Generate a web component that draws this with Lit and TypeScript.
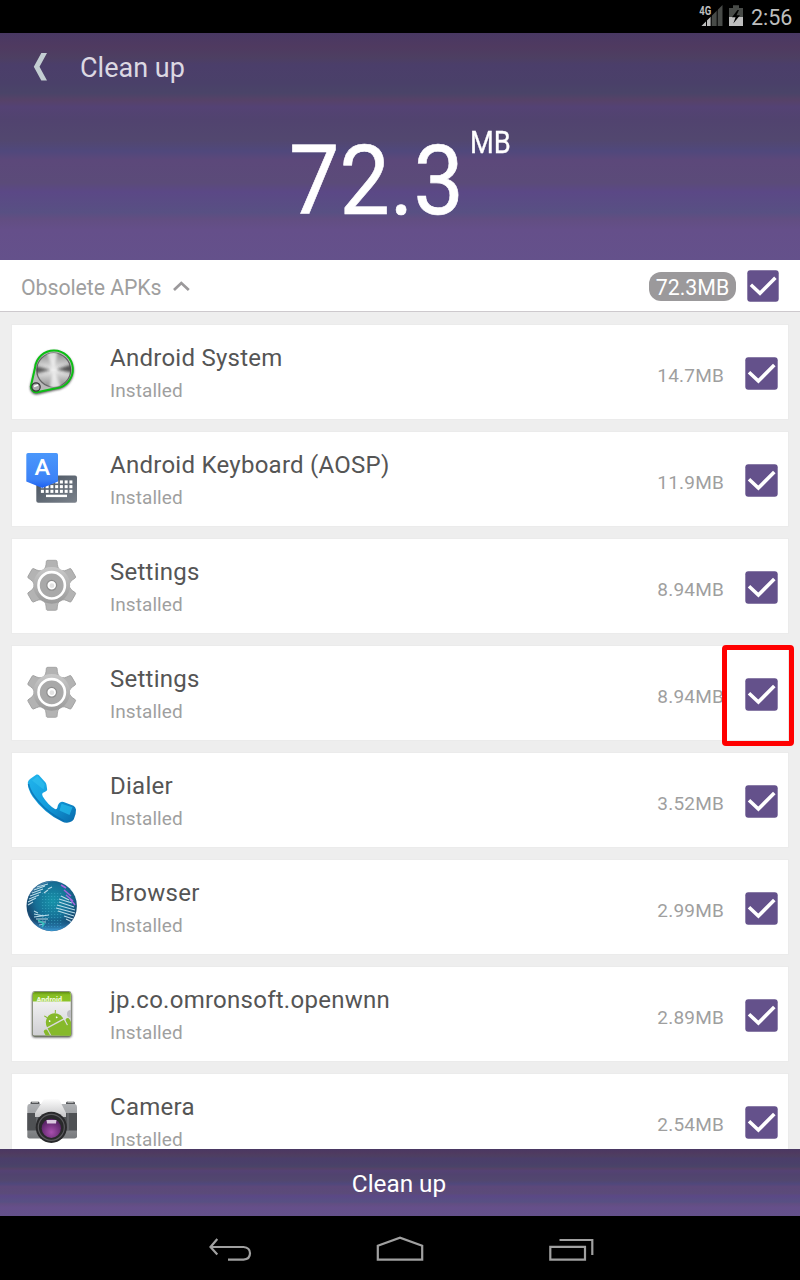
import { LitElement, html, svg, css } from "lit";
import { customElement, property } from "lit/decorators.js";

const androidSystem = svg`
  <defs>
    <linearGradient id="g1" x1="0" y1="0" x2="0" y2="1"><stop offset="0" stop-color="#8a8a8a"/><stop offset=".5" stop-color="#eee"/><stop offset="1" stop-color="#8b8b8b"/></linearGradient>
    <filter id="s1" x="-20%" y="-20%" width="140%" height="140%"><feGaussianBlur stdDeviation="1.3"/></filter>
    <filter id="s2" x="-20%" y="-20%" width="140%" height="140%"><feGaussianBlur stdDeviation="1.4"/></filter>
    <clipPath id="s3"><circle cx="29.7" cy="27" r="17"/></clipPath>
  </defs>
  <path d="M11.1 25 A18.7 18.7 0 1 1 33 45 L13 49.6 A5.8 5.8 0 0 1 6.6 43.5 Z" transform="translate(.3 .9)" fill="#555" stroke="#555" stroke-width="2" filter="url(#s1)"/>
  <path d="M11.1 24.5 A18.9 18.9 0 1 1 33 45 L13 49.3 A5.8 5.8 0 0 1 6.8 43.5 Z" fill="#b9b9b9" stroke="#0bbf13" stroke-width="2"/>
  <circle cx="29.7" cy="27" r="17" fill="url(#g1)" stroke="#666" stroke-width="1.2"/>
  <g clip-path="url(#s3)"><g filter="url(#s2)">
    <path d="M27 27 L10 22.5 V31 Z" fill="#333" opacity=".8"/>
    <path d="M32 26.5 L49 21 V30 Z" fill="#2a2a2a" opacity=".8"/>
    <path d="M29.7 27 L22 8 H34 Z M29.7 27 L25 46 H38 Z" fill="#fff" opacity=".7"/>
  </g></g>
  <circle cx="12" cy="44" r="4.2" fill="#aaa" stroke="#333" stroke-width="1.2"/>
  <path d="M10 43.5 L14 42" stroke="#fff" stroke-width="1.4"/>`;

const keyboard = svg`
  <defs>
    <linearGradient id="k1" x1="0" y1="0" x2="0" y2="1"><stop offset="0" stop-color="#4a97fb"/><stop offset=".75" stop-color="#3d83f7"/><stop offset="1" stop-color="#1d5ff0"/></linearGradient>
    <linearGradient id="k2" x1="0" y1="0" x2="1" y2="1"><stop offset="0" stop-color="#46515e"/><stop offset="1" stop-color="#7b828b"/></linearGradient>
  </defs>
  <rect x="12.3" y="25.6" width="40.7" height="27.2" rx="2" fill="url(#k2)"/>
  ${[0, 1, 2].map((r) => [0, 1, 2, 3, 4, 5, 6].map((c) => svg`<rect x=${16.9 + c * 4.75} y=${30.4 + r * 4.7} width="3" height="3.1" fill="#fff"/>`))}
  <rect x="22" y="44.7" width="21" height="2.4" fill="#fff"/>
  <path d="M4 3 H32.3 Q34 3 34 4.7 V31.5 L18.3 38 L2.3 31.5 V4.7 Q2.3 3 4 3 Z" fill="url(#k1)"/>
  <text x="18.2" y="25" text-anchor="middle" textLength="15.6" lengthAdjust="spacingAndGlyphs" font-family="Roboto, sans-serif" font-size="22.5" font-weight="500" fill="#fff">A</text>`;

const gear = svg`
  <defs><linearGradient id="e1" x1="0" y1="0" x2="0" y2="1"><stop offset="0" stop-color="#c9c9c9"/><stop offset="1" stop-color="#9a9a9a"/></linearGradient></defs>
  <g fill="#b3b3b3" stroke="#9c9c9c" stroke-width=".8">
    ${[0, 60, 120, 180, 240, 300].map((a) => svg`<path transform="rotate(${a} 27.7 28.3)" d="M20 12.5 Q22 10 22 7.5 L22.4 4 Q22.6 3.3 24 3.3 H31.4 Q32.8 3.3 33 4 L33.4 7.5 Q33.4 10 35.4 12.5 Z"/>`)}
  </g>
  <circle cx="27.7" cy="28.3" r="18.4" fill="url(#e1)"/>
  <circle cx="27.7" cy="28.3" r="13.2" fill="#a9a9a9" stroke="#fff" stroke-width="2.6"/>
  <circle cx="27.7" cy="28.3" r="4.9" fill="#fff" stroke="#8d8d8d" stroke-width="1.3"/>
  <circle cx="27.9" cy="28.7" r="2.4" fill="#e3e3e3"/>`;

const dialer = svg`
  <defs><linearGradient id="d1" x1="0" y1="0" x2=".9" y2="1"><stop offset="0" stop-color="#22b4ec"/><stop offset=".55" stop-color="#129ddd"/><stop offset="1" stop-color="#0a6fb0"/></linearGradient></defs>
  <path d="M12.5 3.6 Q13.8 3 14.8 4 L21.5 11.5 Q22.3 12.5 22.5 14 L23.2 18.4 Q23 20 21.5 20.6 L18.6 22 Q17.6 23 18.8 25.5 Q24 34 31 38 Q33 38.6 33.4 36.5 Q34 32 37 30.9 Q38.3 30.6 39.6 31 L49.5 34.8 Q51.4 35.8 52 38.5 Q52.3 42.5 49.8 48.2 Q48.3 51 43 51.8 Q40.5 52 38 50.6 Q20 42 8.5 25.5 Q3.6 18 3.8 11.5 Q4 9.6 6 8 Z" fill="url(#d1)"/>
  <path d="M37.5 32.8 L48.5 36.2 L45.5 44 L35.5 39.5 Z" fill="#27bdee" opacity=".7"/>
  <path d="M13.5 5 L20.8 13.3 L19.5 18.5 L8 9.5 Z" fill="#35c6f2" opacity=".5"/>
  <path d="M4.5 13 Q6 21 14 30 Q25 43 40 50" fill="none" stroke="#0a69ab" stroke-width="1.5" opacity=".7"/>`;

const browser = svg`
  <defs>
    <radialGradient id="b1" cx=".52" cy=".4" r=".62"><stop offset="0" stop-color="#1793a9"/><stop offset=".55" stop-color="#166f96"/><stop offset=".85" stop-color="#17486f"/><stop offset="1" stop-color="#3a6493"/></radialGradient>
    <linearGradient id="b2" x1="0" y1="0" x2="0" y2="1"><stop offset=".75" stop-color="#2a8fcb" stop-opacity="0"/><stop offset="1" stop-color="#42b4ef"/></linearGradient>
    <pattern id="b3" width="3" height="3" patternUnits="userSpaceOnUse"><rect width="1.2" height="1" fill="#48b4cf"/></pattern>
    <clipPath id="b4"><circle cx="27.7" cy="28" r="25"/></clipPath>
  </defs>
  <circle cx="27.7" cy="28" r="25.2" fill="url(#b1)"/>
  <g clip-path="url(#b4)">
    <rect x="17" y="14" width="22" height="36" fill="url(#b3)" opacity=".5"/>
    <path d="M0 0 H56 V15 Q38 -3 17 7 Q8 12 0 26 Z" fill="#8ba9d4" opacity=".4"/>
    <g stroke="#b9dbe8" stroke-width="1.1" fill="none">
      <path d="M13 9 L24 6 M10 12 L21 8 M8 15 L19 11 M6 18 L17 14 M5 21 L15 17 M4 24 L12 20 M4 27 L9 24 M24 11 L28 9 M20 15 L24 12"/>
      <path d="M10 33 L14 35 M10 36 L20 38 M10 39 L25 37 M12 41 L24 41 M14 44 L22 44 M15 47 L20 46"/>
      <path d="M35 24 L50 29 M33 27 L51 32 M32 30 L51 35 M34 33 L50 38 M40 38 L49 41 M42 41 L48 44 M37 18 L45 22 M35 21 L48 25"/>
    </g>
    <path d="M37 7 L42 10 M40 12 L47 18 M42 17 L49 23 M46 21 L51 27" stroke="#a565dc" stroke-width="1.5"/>
    <path d="M14 42 L20 46 L18 49" stroke="#31d2b4" stroke-width="1.5" fill="none"/>
    <rect width="56" height="56" fill="url(#b2)"/>
  </g>`;

const openwnn = svg`
  <defs>
    <linearGradient id="o1" x1="0" y1="0" x2="0" y2="1"><stop offset="0" stop-color="#fafafa"/><stop offset="1" stop-color="#cfcfd3"/></linearGradient>
    <linearGradient id="o2" x1="0" y1="0" x2="0" y2="1"><stop offset="0" stop-color="#5f8f12"/><stop offset=".3" stop-color="#86bd21"/><stop offset="1" stop-color="#8bc32a"/></linearGradient>
    <clipPath id="o3"><rect x="8.8" y="16" width="38.2" height="34.4" rx="1"/></clipPath>
    <clipPath id="o4"><rect x="8" y="6" width="40" height="10.4"/></clipPath>
    <filter id="o5"><feGaussianBlur stdDeviation="1"/></filter>
  </defs>
  <rect x="8" y="8" width="39.8" height="44.6" rx="3" fill="#555" filter="url(#o5)"/>
  <rect x="8.3" y="6.3" width="39" height="45.2" rx="2.4" fill="#6b7558"/>
  <rect x="8.8" y="7" width="38" height="43.4" rx="1.5" fill="url(#o1)"/>
  <path d="M8.8 16.4 V9 Q8.8 7 10.8 7 H45 Q46.8 7 46.8 9 V16.4 Z" fill="url(#o2)"/>
  <g clip-path="url(#o4)"><text x="12.6" y="17" textLength="25.4" lengthAdjust="spacingAndGlyphs" font-family="Roboto, sans-serif" font-weight="900" font-size="7.2" fill="#f0fadb">Android</text></g>
  <g clip-path="url(#o3)">
    <circle cx="47" cy="29" r="4" fill="#bdbdc2"/>
    <g transform="translate(32 39.5) rotate(-28)" fill="#86b92b" stroke="#86b92b">
      <path d="M-9.2 -1.8 A9.2 9.7 0 0 1 9.2 -1.8 Z" stroke="none"/>
      <path d="M-4.5 -10 L-6.3 -13.2 M4.5 -10 L6.3 -13.2" stroke-width="1"/>
      <path d="M-9.2 -.5 H9.2 V17 H-9.2 Z" stroke="none"/>
      <path d="M9 6 H20 V20 H-6 V14 Z" stroke="none"/>
      <rect x="-14.3" y="-.5" width="4" height="12" rx="2" stroke="none"/>
      <rect x="10.4" y="-.5" width="4" height="12" rx="2" stroke="none"/>
      <circle cx="-4" cy="-6" r=".9" fill="#fff" stroke="none"/><circle cx="4" cy="-6" r=".9" fill="#fff" stroke="none"/>
    </g>
  </g>`;

const camera = svg`
  <defs>
    <linearGradient id="c1" x1="0" y1="0" x2="0" y2="1"><stop offset="0" stop-color="#b0b2b5"/><stop offset="1" stop-color="#77797c"/></linearGradient>
    <linearGradient id="c2" x1="0" y1="0" x2="0" y2="1"><stop offset="0" stop-color="#fcfcfc"/><stop offset="1" stop-color="#c6c6c8"/></linearGradient>
    <radialGradient id="c3" cx=".5" cy=".7" r=".6"><stop offset="0" stop-color="#a84fae"/><stop offset="1" stop-color="#5b2468"/></radialGradient>
  </defs>
  <rect x="6.5" y="9.5" width="9" height="4" rx="1.5" fill="#55575a"/><rect x="42" y="9.5" width="9" height="4" rx="1.5" fill="#55575a"/>
  <rect x="8" y="9.3" width="6" height="1.3" fill="#ddd"/><rect x="43.5" y="9.3" width="6" height="1.3" fill="#ddd"/>
  <path d="M5 12 H51 Q53 12.5 53 15 V44.5 Q53 46.6 50.5 46.6 H5.5 Q3.3 46.6 3.3 44.5 V15 Q3.3 12.5 5 12 Z" fill="url(#c1)"/>
  <rect x="3.3" y="21" width="49.7" height="17.5" fill="#4f5154"/>
  <path d="M13 21 V38.5 M44 21 V38.5" stroke="#77797c" stroke-width="1"/>
  <path d="M19.5 8 Q20 7 21.5 7 H33.5 Q35 7 35.5 8 L42 21 V25 H11 V21 Z" fill="url(#c2)"/>
  <circle cx="27.3" cy="35.3" r="15.6" fill="#29292b"/>
  <circle cx="27.3" cy="35.3" r="13" fill="none" stroke="#5a5a5d" stroke-width="1.2"/>
  <circle cx="27.3" cy="36.3" r="9.6" fill="url(#c3)"/>
  <path d="M22.5 28 H32.5 L32 31.5 H23 Z" fill="#f0e4f3" opacity=".85"/>`;

const apps = [
  { name: "Android System", size: "14.7MB", icon: androidSystem },
  { name: "Android Keyboard (AOSP)", size: "11.9MB", icon: keyboard },
  { name: "Settings", size: "8.94MB", icon: gear },
  { name: "Settings", size: "8.94MB", icon: gear, marked: true },
  { name: "Dialer", size: "3.52MB", icon: dialer },
  { name: "Browser", size: "2.99MB", icon: browser },
  { name: "jp.co.omronsoft.openwnn", size: "2.89MB", icon: openwnn },
  { name: "Camera", size: "2.54MB", icon: camera },
];

const check = html`<svg class="check" width="33" height="33" viewBox="0 0 33 33">
  <rect x=".3" y=".3" width="32.4" height="32.4" rx="3" fill="#64518b"/>
  <path d="M4 15.2 L13.4 24 L29.3 8" fill="none" stroke="#fff" stroke-width="3.6"/>
</svg>`;

@customElement("apk-row")
class ApkRow extends LitElement {
  @property({ attribute: false }) app: any;

  static styles = css`
    :host { display: block; flex: none; }
    .card { position: relative; display: flex; height: 94px; background: #fff; box-shadow: 0 0 0 1px #ebebeb; align-items: flex-start; }
    .icon { margin: 18px 0 0 12px; flex: none; }
    .text { margin-left: 30px; flex: 1; }
    .name { margin-top: 18px; font-size: 24px; line-height: 30px; letter-spacing: .26px; color: #555; white-space: nowrap; }
    .state { margin-top: 5px; font-size: 19px; line-height: 25px; letter-spacing: .08px; color: #9f9f9f; }
    .size { margin-top: 38px; font-size: 19px; line-height: 25px; letter-spacing: .2px; color: #9f9f9f; }
    .check { margin: 32px 10px 0 21px; flex: none; }
    .mark { position: absolute; left: 710px; top: -1px; width: 62px; height: 91px; border: 5px solid #f00; border-radius: 4px; }
  `;

  render() {
    return html`<div class="card">
      <svg class="icon" width="56" height="56" viewBox="0 0 56 56">${this.app.icon}</svg>
      <div class="text"><div class="name">${this.app.name}</div><div class="state">Installed</div></div>
      <div class="size">${this.app.size}</div>
      ${check}
      ${this.app.marked ? html`<div class="mark"></div>` : ""}
    </div>`;
  }
}

@customElement("app-root")
class AppRoot extends LitElement {
  static styles = css`
    :host {
      --shade: linear-gradient(#493863 0%, #4f3a60 6%, #4d3f62 11%, #4b3e6a 14%, #4a4069 22%, #4a4468 26.5%, #564268 29.5%, #544274 32.5%, #51436f 38%, #52476f 47%, #50487c 52%, #5c487a 56%, #5b4b79 66%, #5b4886 70%, #585083 79%, #624e82 82%, #654f8a 87%, #64518b 100%);
      display: flex; flex-direction: column; width: 800px; height: 1280px; overflow: hidden; background: #eee; font-family: Roboto, sans-serif;
    }
    .status { height: 33px; flex: none; background: #000; display: flex; justify-content: flex-end; color: #bebebe; }
    .status svg { flex: none; }
    .time { width: 49px; font-size: 21.5px; line-height: 35px; }
    .hero { height: 227px; flex: none; background: var(--shade); display: flex; flex-direction: column; color: #fff; }
    .bar { height: 68px; display: flex; align-items: center; color: #dcd8e2; }
    .back { margin-left: 32px; }
    .title { margin: 2px 0 0 32px; font-size: 27px; line-height: 40px; }
    .total { display: flex; align-items: flex-start; padding-left: 289px; }
    .num { width: 176px; font-size: 97px; line-height: 100px; margin-top: 30px; transform: scaleX(.925); transform-origin: 0 0; -webkit-text-stroke: .6px #fff; }
    .unit { margin-left: 5px; margin-top: 24px; font-size: 31px; line-height: 36px; transform: scaleX(.88); transform-origin: 0 0; -webkit-text-stroke: .3px #fff; }
    .group { height: 51px; flex: none; background: #fff; border-bottom: 1px solid #cdc9cd; display: flex; align-items: flex-start; }
    .label { margin: 14px 0 0 21px; width: 141px; white-space: nowrap; font-size: 21.3px; line-height: 28px; letter-spacing: -.07px; color: #9f9f9f; }
    .chev { margin: 20px 0 0 11px; }
    .pill { margin: 12px 11px 0 auto; width: 87px; height: 29px; border-radius: 12px; background: #9b999b; color: #fff; font-size: 21.3px; line-height: 32px; text-align: center; }
    .group .check { margin: 10px 21px 0 0; width: 32px; height: 32px; }
    .list { flex: 1; min-height: 0; overflow: hidden; padding: 13px 12px 0; display: flex; flex-direction: column; gap: 13px; }
    .action { height: 67px; flex: none; background: var(--shade); color: #fff; text-align: center; font-size: 24.3px; line-height: 70px; text-indent: -2px; }
    .nav { height: 64px; flex: none; background: #000; display: flex; align-items: flex-start; padding-left: 208px; }
  `;

  render() {
    return html`
      <div class="status">
        <svg width="52" height="33" viewBox="699 0 52 33">
          <path d="M722.5 5 V26 H701.5 Z" fill="#484b48"/>
          <path d="M710.8 16.7 V26 H701.5 Z" fill="#bebebe"/>
          <path d="M706.5 12 V26 M711.2 5 V26 M717.2 5 V26" stroke="#000" stroke-width="1"/>
          <rect x="698" y="4" width="13.5" height="12.5" fill="#000"/>
          <text x="699.3" y="15.2" font-size="12.5" font-weight="700" textLength="12" lengthAdjust="spacingAndGlyphs" fill="#bebebe" font-family="Roboto, sans-serif">4G</text>
          <path d="M729 8 H733 V5.3 H739 V8 H743 V17 H729 Z" fill="#484b48"/>
          <path d="M729 17 H743 V26 H729 Z" fill="#bebebe"/>
          <path d="M737.5 10 L732 17.3 H735.6 L733.3 23.5 L740 15.2 H736.5 L739 10 Z" fill="#000"/>
        </svg>
        <div class="time">2:56</div>
      </div>
      <div class="hero">
        <div class="bar">
          <svg class="back" width="16" height="28" viewBox="0 0 16 28"><path d="M9.3 0 H15 L7.5 13.8 L15 27.5 H9.3 L1.8 13.8 Z" fill="#c3ced2"/></svg>
          <div class="title">Clean up</div>
        </div>
        <div class="total"><div class="num">72.3</div><div class="unit">MB</div></div>
      </div>
      <div class="group">
        <div class="label">Obsolete APKs</div>
        <svg class="chev" width="17" height="12" viewBox="0 0 17 12"><path d="M1 10 L8.3 3 L15.8 10" fill="none" stroke="#9b999b" stroke-width="2.7"/></svg>
        <div class="pill">72.3MB</div>
        ${check}
      </div>
      <div class="list">${apps.map((a) => html`<apk-row .app=${a}></apk-row>`)}</div>
      <div class="action">Clean up</div>
      <div class="nav">
        <svg width="388" height="64" viewBox="208 1216 388 64" fill="none" stroke="#a0a0a0" stroke-width="2.2">
          <path d="M210.5 1247 H243.5 Q250 1247.5 250 1253.3 Q250 1259.3 243.5 1259.7 H228 M217.3 1239 L210.5 1247 L217.3 1254.5"/>
          <path d="M377.8 1259.7 V1245.8 L400 1237.7 L422.2 1245.8 V1259.7 Z"/>
          <path d="M550.3 1246.8 H585 V1259.7 H550.3 Z M559.5 1240 H592.3 V1255"/>
        </svg>
      </div>`;
  }
}
